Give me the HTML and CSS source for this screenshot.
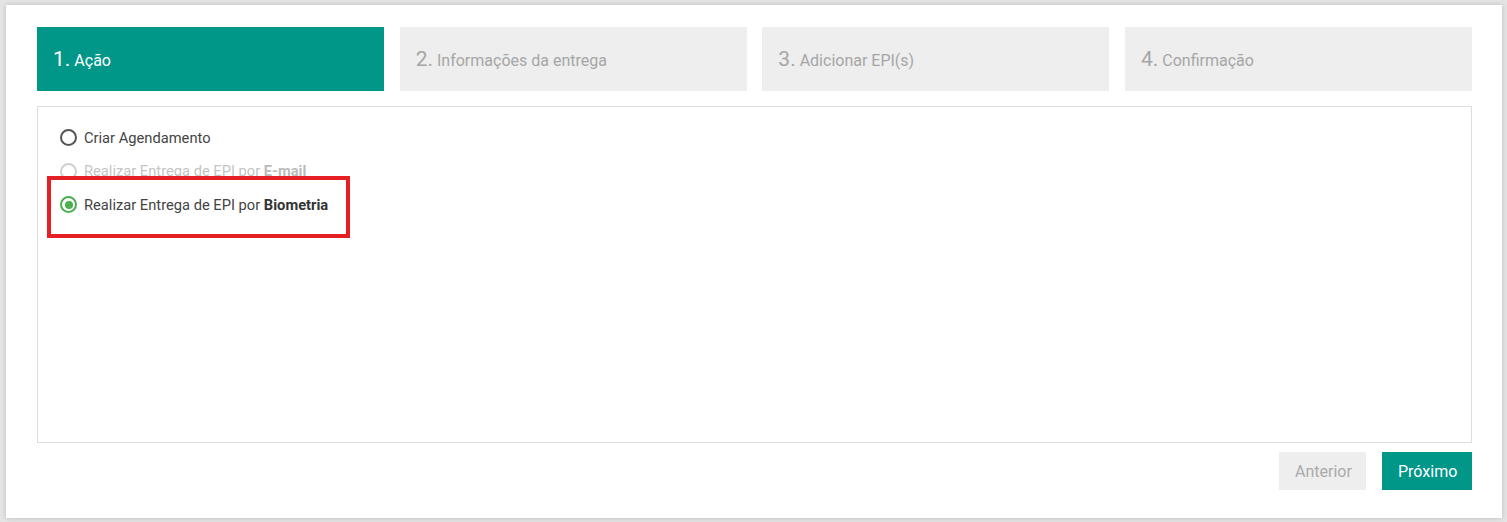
FILE: index.html
```html
<!DOCTYPE html>
<html lang="pt">
<head>
<meta charset="utf-8">
<title>Entrega de EPI</title>
<link rel="stylesheet" href="styles.css">
</head>
<body>
<div class="card">
  <div class="steps">
    <div class="step active"><span class="num">1.</span> Ação</div>
    <div class="step"><span class="num">2.</span> Informações da entrega</div>
    <div class="step"><span class="num">3.</span> Adicionar EPI(s)</div>
    <div class="step"><span class="num">4.</span> Confirmação</div>
  </div>
  <div class="panel">
    <div class="options">
      <label class="opt"><span class="radio"></span><span>Criar Agendamento</span></label>
      <label class="opt disabled"><span class="radio"></span><span>Realizar Entrega de EPI por <b>E-mail</b></span></label>
      <label class="opt checked"><span class="radio"></span><span>Realizar Entrega de EPI por <b>Biometria</b></span></label>
      <div class="highlight"></div>
    </div>
  </div>
  <div class="actions">
    <button class="btn prev">Anterior</button>
    <button class="btn next">Próximo</button>
  </div>
</div>
</body>
</html>
```
FILE: styles.css
```css
* { box-sizing: border-box; }
html, body { margin: 0; padding: 0; }
body {
  background: #e4e4e4;
  font-family: Roboto, "Liberation Sans", Arial, sans-serif;
  width: 1507px;
  height: 522px;
  overflow: hidden;
  padding: 5px 5px 4px 6px;
}
.card {
  background: #fff;
  width: 1496px;
  height: 513px;
  box-shadow: 0 0 5px rgba(0,0,0,0.18);
  padding: 22px 30px 0 31px;
}
.steps {
  display: flex;
  gap: 15.67px;
  height: 64px;
}
.step {
  flex: 1;
  background: #eeeeee;
  color: #a6a6a6;
  font-size: 16px;
  display: flex;
  align-items: baseline;
  padding: 20px 0 0 16px;
  white-space: pre;
}
.step .num { font-size: 21px; }
.step.active { background: #009688; color: #fff; }
.panel {
  margin-top: 15px;
  height: 337px;
  border: 1px solid #dddddd;
  padding: 14px 0 0 22px;
}
.options { position: relative; display: flex; flex-direction: column; }
.opt {
  display: flex;
  align-items: center;
  height: 33.5px;
  font-size: 14.7px;
  color: #444;
  gap: 7px;
}
.opt b { font-weight: 700; color: #333; }
.radio {
  width: 17px;
  height: 17px;
  border: 2px solid #555;
  border-radius: 50%;
  position: relative;
  flex: none;
}
.opt.disabled { color: #c4c4c4; }
.opt.disabled b { color: #bbb; }
.opt.disabled .radio { border-color: #d0d0d0; }
.opt.checked .radio { border-color: #4caf50; }
.opt.checked .radio::after {
  content: "";
  position: absolute;
  left: 2.5px; top: 2.5px;
  width: 8px; height: 8px;
  border-radius: 50%;
  background: #4caf50;
}
.highlight {
  position: absolute;
  left: -13px;
  top: 55px;
  width: 303px;
  height: 62px;
  border: 4px solid #e51f24;
  pointer-events: none;
}
.actions {
  display: flex;
  justify-content: flex-end;
  gap: 16px;
  margin-top: 9px;
}
.btn {
  height: 38px;
  border: none;
  font-family: inherit;
  font-size: 16px;
  padding: 0 16px;
}
.btn.prev { background: #eeeeee; color: #aaaaaa; width: 87px; }
.btn.next { background: #009688; color: #fff; width: 90px; }
```
